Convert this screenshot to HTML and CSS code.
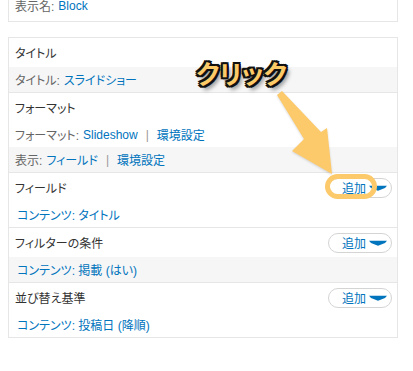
FILE: index.html
```html
<!DOCTYPE html>
<html lang="ja">
<head>
    <meta charset="UTF-8">
    <meta name="viewport" content="width=device-width, initial-scale=1.0">
    <title>ビューの設定</title>
    <link rel="stylesheet" href="styles.css">
</head>
<body>

<div class="page">
    <div class="box box-top">
        <div class="setting"><span class="label">表示名:</span> <a class="link">Block</a></div>
    </div>

    <div class="box">
        <div class="bucket">
            <div class="bucket-head">タイトル</div>
            <div class="setting even"><span class="label">タイトル:</span> <a class="link">スライドショー</a></div>
        </div>

        <div class="bucket">
            <div class="bucket-head">フォーマット</div>
            <div class="setting"><span class="label">フォーマット:</span> <a class="link">Slideshow</a> <span class="sep">|</span> <a class="link">環境設定</a></div>
            <div class="setting even"><span class="label">表示:</span> <a class="link">フィールド</a> <span class="sep">|</span> <a class="link">環境設定</a></div>
        </div>

        <div class="bucket">
            <div class="bucket-head">フィールド
                <span class="add-button"><span class="add-text">追加</span><svg class="drop" viewBox="0 0 18 6"><path d="M0 0.8 H18 L16 3 L9 5.8 L2 3 Z"/></svg></span>
            </div>
            <div class="setting field"><a class="link">コンテンツ: タイトル</a></div>
        </div>

        <div class="bucket">
            <div class="bucket-head">フィルターの条件
                <span class="add-button"><span class="add-text">追加</span><svg class="drop" viewBox="0 0 18 6"><path d="M0 0.8 H18 L16 3 L9 5.8 L2 3 Z"/></svg></span>
            </div>
            <div class="setting field even"><a class="link">コンテンツ: 掲載 (はい)</a></div>
        </div>

        <div class="bucket">
            <div class="bucket-head">並び替え基準
                <span class="add-button"><span class="add-text">追加</span><svg class="drop" viewBox="0 0 18 6"><path d="M0 0.8 H18 L16 3 L9 5.8 L2 3 Z"/></svg></span>
            </div>
            <div class="setting field"><a class="link">コンテンツ: 投稿日 (降順)</a></div>
        </div>
    </div>

    <!-- 注釈 -->
    <div class="callout">クリック</div>
    <svg class="pointer" viewBox="0 0 70 95">
        <polygon points="7,10 12,6 51,47 57,43 62,89 22,66 34,54"/>
    </svg>
    <span class="ring"></span>
</div>

</body>
</html>
```

FILE: styles.css
```css
body {
    margin: 0;
    background-color: #fff;
    font-family: "Liberation Sans", "Noto Sans CJK JP", sans-serif;
    font-size: 12px;
    font-feature-settings: "palt";
    color: #333;
}
.page {
    position: relative;
    display: flow-root;
    padding: 0 15px 0 8px;
}
.box {
    border: 1px solid #e6e6e6;
    background-color: #fff;
    margin-top: 15px;
}
.box-top {
    margin-top: -11px;
}
.box-top .setting {
    height: 31px;
}
.bucket + .bucket {
    border-top: 1px solid #e6e6e6;
}
.bucket-head {
    height: 29px;
    display: flex;
    align-items: center;
    justify-content: space-between;
    padding: 0 5px 0 6px;
    color: #333;
}
.setting {
    height: 25px;
    display: flex;
    align-items: center;
    gap: 4px;
    padding: 0 6px;
    color: #666;
}
.setting.even {
    background-color: #f6f6f6;
}
.setting.field {
    padding-left: 8px;
}
.link {
    color: #0074bd; /* リンクの色 */
    text-decoration: none;
}
.sep {
    color: #999;
    margin: 0 4px;
}
.add-button {
    box-sizing: border-box;
    flex-shrink: 0;
    height: 20px;
    width: 64px;
    display: flex;
    align-items: center;
    gap: 3px;
    padding: 0 6px 0 13px;
    border: 1px solid #d4d4d4;
    border-radius: 10px;
    background-color: #fff;
    color: #0074bd;
    font-size: 12px;
    white-space: nowrap;
}
.drop {
    flex-shrink: 0;
    width: 18px;
    height: 6px;
    fill: #0074bd;
}
.callout {
    position: absolute;
    left: 196px;
    top: 58px;
    font-size: 26px;
    font-weight: 700;
    line-height: 30px;
    color: #fdca68;
    font-family: "Noto Sans CJK JP", sans-serif;
    text-shadow:
        -2px 0 0 #111, 2px 0 0 #111, 0 -2px 0 #111, 0 2px 0 #111,
        -2px -2px 0 #111, 2px -2px 0 #111, -2px 2px 0 #111, 2px 2px 0 #111,
        3px 4px 4px rgba(0, 0, 0, 0.5);
}
.pointer {
    position: absolute;
    left: 270px;
    top: 85px;
    width: 70px;
    height: 95px;
    fill: #fcc96b;
    filter: drop-shadow(0 1px 1px rgba(0, 0, 0, 0.15));
}
.ring {
    position: absolute;
    left: 325px;
    top: 174px;
    box-sizing: border-box;
    width: 52px;
    height: 25px;
    border: 5px solid #fcc96b;
    border-radius: 13px;
}
```
